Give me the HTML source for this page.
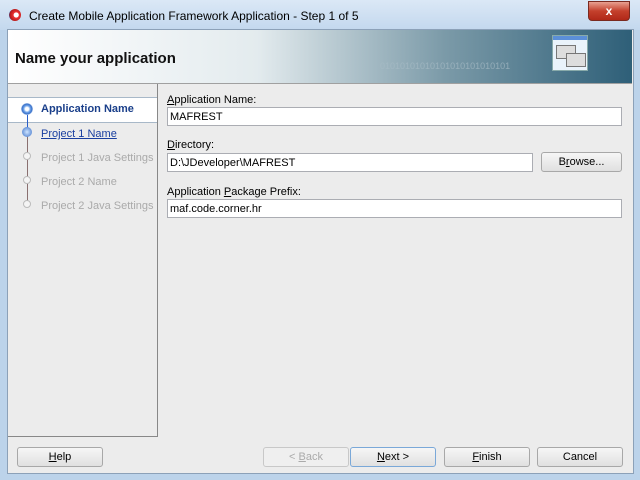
<!DOCTYPE html><html><head><style>
body{margin:0;width:640px;height:480px;overflow:hidden;font-family:"Liberation Sans",sans-serif;font-size:11px;position:relative;background:#bcd3ea}
.a{position:absolute}
.title{left:0;top:0;width:640px;height:30px;background:linear-gradient(#dbe8f6,#c3d8ee);}
.inner{left:7px;top:29px;width:625px;height:443px;background:#ececec;border:1px solid #8ca1b8}
.hdr{left:8px;top:30px;width:624px;height:53px;background:linear-gradient(90deg,#fff 0%,#e3ebee 40%,#7b9aa8 70%,#2e5f78 100%);border-bottom:1px solid #a0a0a0}
input{position:absolute;border:1px solid #abadb3;background:#fff;font:11px "Liberation Sans",sans-serif;padding:0 2px;box-sizing:border-box;height:19px}
.btn{position:absolute;height:20px;border:1px solid #a8a8a8;border-radius:3px;background:linear-gradient(#f6f6f6,#e0e0e0);box-sizing:border-box;text-align:center;line-height:18px;font-size:11px}
.lbl{position:absolute;font-size:11px;color:#000}
u{text-decoration:underline}
</style></head><body>
<div class="a title"></div>
<div class="a" style="left:9px;top:9px;width:12px;height:12px;border-radius:50%;background:radial-gradient(circle at 60% 50%,#fff 25%,#e33 30%,#b01818 70%,#2a55a0 75%)"></div>
<div class="a" style="left:29px;top:9px;font-size:12px;color:#000">Create Mobile Application Framework Application - Step 1 of 5</div>
<div class="a" style="left:588px;top:1px;width:40px;height:18px;border:1px solid #7a2a20;border-radius:0 0 4px 4px;background:linear-gradient(#e8a090,#c4402c 50%,#b02818);color:#fff;text-align:center;font-weight:bold;font-size:12px;line-height:18px">x</div>
<div class="a inner"></div>
<div class="a hdr"></div>
<div class="a" style="left:15px;top:50px;font-size:15px;font-weight:bold;color:#111">Name your application</div>
<div class="a" style="left:380px;top:61px;font-size:9px;color:#a8bcc6;opacity:.7">01010101010101010101010101</div>
<div class="a" style="left:552px;top:35px;width:34px;height:34px;background:#eaf3fb;border:1px solid #8aa;"><div class="a" style="left:0;top:0;width:34px;height:4px;background:#5b8fd8"></div><div class="a" style="left:3px;top:9px;width:18px;height:12px;border:1px solid #777;background:#ddd"></div><div class="a" style="left:13px;top:17px;width:18px;height:12px;border:1px solid #777;background:#ddd"></div></div>
<div class="a" style="left:8px;top:84px;width:149px;height:352px;border-right:1px solid #888;border-bottom:1px solid #888;background:#ececec"></div>
<div class="a" style="left:8px;top:97px;width:149px;height:24px;background:#fff;border-top:1px solid #a8b8c8;border-bottom:1px solid #a8b8c8"></div>
<div class="a" style="left:27px;top:110px;width:1px;height:96px;background:#8a7070"></div>
<div class="a" style="left:27px;top:110px;width:1px;height:24px;background:#2a5fc8"></div>
<div class="a" style="left:21px;top:103px;width:12px;height:12px;border-radius:50%;background:radial-gradient(#fff 20%,#6aa0e8 40%,#3a70c8 60%,#cfe0f6 70%)"></div>
<div class="a" style="left:22px;top:127px;width:10px;height:10px;border-radius:50%;background:radial-gradient(#cfe4ff,#3a70c8)"></div>
<div class="a" style="left:23px;top:152px;width:8px;height:8px;border-radius:50%;background:#f4f4f4;border:1px solid #bbb;box-sizing:border-box"></div>
<div class="a" style="left:23px;top:176px;width:8px;height:8px;border-radius:50%;background:#f4f4f4;border:1px solid #bbb;box-sizing:border-box"></div>
<div class="a" style="left:23px;top:200px;width:8px;height:8px;border-radius:50%;background:#f4f4f4;border:1px solid #bbb;box-sizing:border-box"></div>
<div class="a" style="left:41px;top:103px;font-weight:bold;color:#1a3f8a;font-size:11px">Application Name</div>
<div class="a" style="left:41px;top:128px;color:#1a3fa0;text-decoration:underline">Project 1 Name</div>
<div class="a" style="left:41px;top:152px;color:#aaa">Project 1 Java Settings</div>
<div class="a" style="left:41px;top:176px;color:#aaa">Project 2 Name</div>
<div class="a" style="left:41px;top:200px;color:#aaa">Project 2 Java Settings</div>
<div class="lbl" style="left:167px;top:94px"><u>A</u>pplication Name:</div>
<input style="left:167px;top:107px;width:455px" value="MAFREST">
<div class="lbl" style="left:167px;top:139px"><u>D</u>irectory:</div>
<input style="left:167px;top:153px;width:366px" value="D:\JDeveloper\MAFREST">
<div class="btn" style="left:541px;top:152px;width:81px">B<u>r</u>owse...</div>
<div class="lbl" style="left:167px;top:186px">Application <u>P</u>ackage Prefix:</div>
<input style="left:167px;top:199px;width:455px" value="maf.code.corner.hr">
<div class="btn" style="left:17px;top:447px;width:86px"><u>H</u>elp</div>
<div class="btn" style="left:263px;top:447px;width:86px;color:#aaa;background:#efefef;border-color:#c8c8c8">&lt; <u>B</u>ack</div>
<div class="btn" style="left:350px;top:447px;width:86px;border-color:#7aa8d8"><u>N</u>ext &gt;</div>
<div class="btn" style="left:444px;top:447px;width:86px"><u>F</u>inish</div>
<div class="btn" style="left:537px;top:447px;width:86px">Cancel</div>
</body></html>
